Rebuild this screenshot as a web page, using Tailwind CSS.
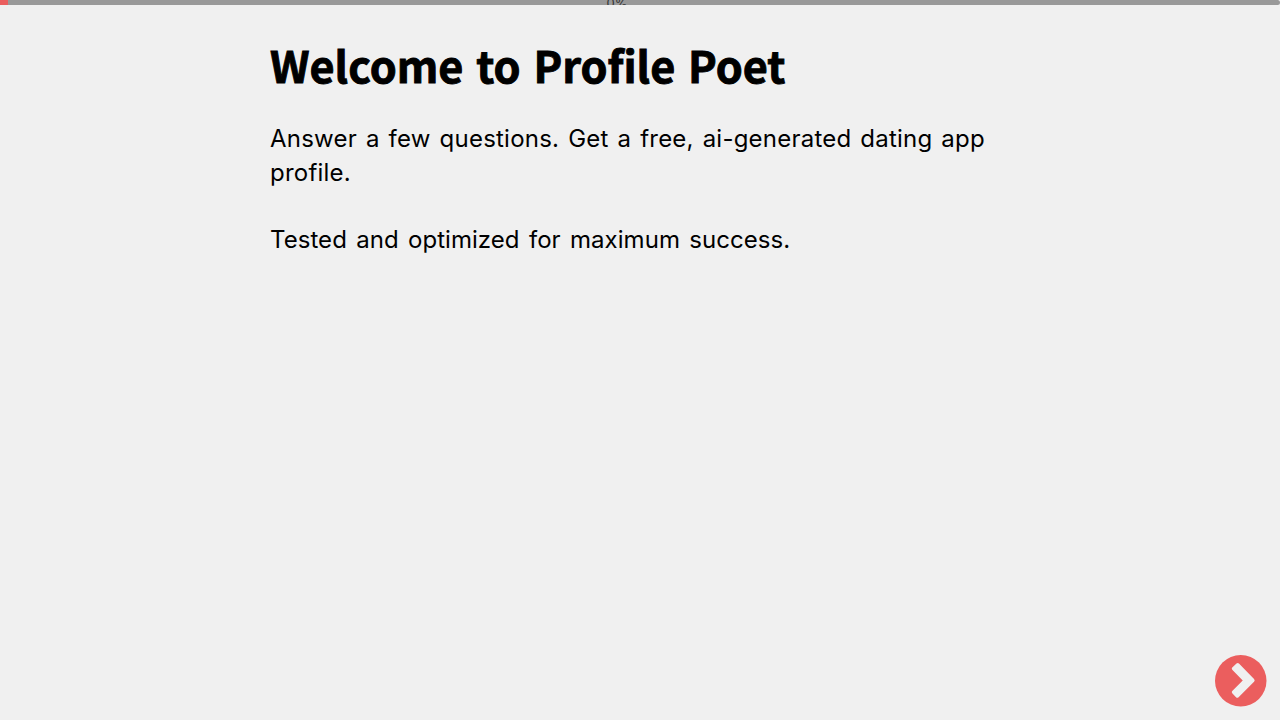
<!DOCTYPE html>
<html lang="en">
<head>
    <meta charset="UTF-8">
    <meta name="viewport" content="width=device-width, initial-scale=1.0">
    <title>Profile Poet</title>
    <script src="https://cdn.jsdelivr.net/npm/@tailwindcss/browser@4"></script>
</head>
<body class="bg-[#f0f0f0] text-black min-h-screen overflow-hidden font-['Inter',sans-serif]">
    <!-- progress -->
    <header class="h-[5px] bg-[#999999] rounded-r-full overflow-hidden flex">
        <div class="w-2 h-full bg-[#eb5e5e] shrink-0"></div>
        <div class="w-[1218px] text-center text-[13px] leading-[6px] text-[#333333]">0%</div>
    </header>

    <main class="w-[740px] mx-auto pt-[31px]">
        <h1 class="font-['Noto_Sans_CJK_SC',sans-serif] font-bold text-[43.2px] leading-[57px] [word-spacing:3px] [-webkit-text-stroke:0.9px_black]">Welcome to Profile Poet</h1>
        <p class="mt-[29px] text-[24px] leading-[33.6px] tracking-[0.22px] [word-spacing:2px]">Answer a few questions. Get a free, ai-generated dating app profile.</p>
        <p class="mt-[33.6px] text-[24px] leading-[33.6px] tracking-[0.05px] [word-spacing:2.5px]">Tested and optimized for maximum success.</p>
    </main>

    <button class="fixed right-[13.5px] bottom-[13.5px] w-[51.5px] h-[51.5px]" aria-label="Next">
        <svg class="block w-full h-full" viewBox="0 0 52 52">
            <circle cx="26" cy="26" r="26" fill="#eb5e5e"/>
            <path fill="#f0f0f0" d="M21.7 8.6 L17.4 12.6 Q16.4 13.7 17.4 14.8 L28 25.7 L17.4 36.4 Q16.4 37.5 17.4 38.6 L21.2 42.6 Q22.5 43.8 23.8 42.6 L39.4 27.1 Q40.8 25.7 39.4 24.3 L24.2 8.6 Q23 7.6 21.7 8.6 Z"/>
        </svg>
    </button>
</body>
</html>
